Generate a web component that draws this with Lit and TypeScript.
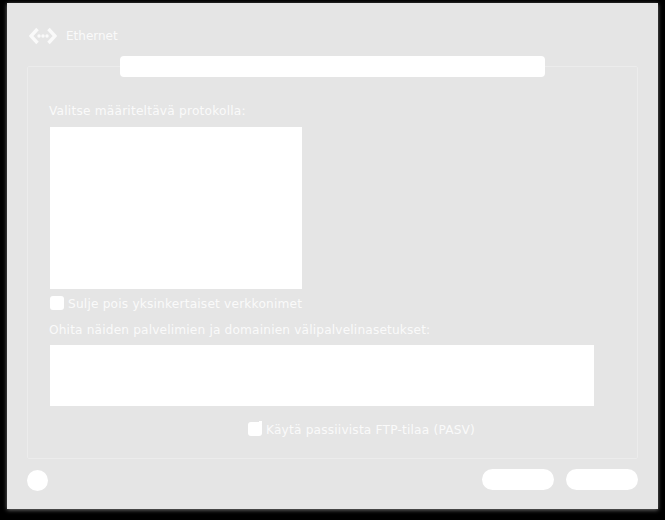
import { LitElement, html, css } from "lit";
import { customElement } from "lit/decorators.js";

@customElement("app-root")
export class AppRoot extends LitElement {
  static styles = css`
    :host { display: block; width: 665px; height: 520px; background: #000; overflow: hidden; font-family: "DejaVu Sans", sans-serif; color: #fafafa; font-size: 12px; }
    .window { box-sizing: border-box; margin: 3px 0 0 7px; width: 651px; height: 506px; background: #e5e5e5; padding: 0 20px; box-shadow: 0 1px 4px rgba(130,130,130,.9); display: flex; flex-direction: column; }
    .header { flex: none; height: 53px; display: flex; align-items: center; gap: 9px; padding-top: 12px; box-sizing: border-box; }
    .header svg { display: block; margin-left: 2px; }
    .header span { font-size: 12px; line-height: 14px; height: 14px; }
    .box { flex: none; position: relative; box-sizing: border-box; margin-top: 10px; height: 393px; border: 1px solid #ececec; border-radius: 2px; padding: 35px 0 0 22px; display: flex; flex-direction: column; align-items: flex-start; }
    .tabs { position: absolute; left: 92px; top: -11px; width: 425px; height: 21px; background: #fff; border-radius: 4px; }
    .label { height: 18px; line-height: 18px; font-size: 12.2px; letter-spacing: .2px; white-space: nowrap; margin-left: -1px; }
    .list { width: 252px; height: 162px; margin: 7px 0 0 0; background: #fff; }
    .check { display: flex; align-items: center; gap: 4px; height: 18px; white-space: nowrap; font-size: 12.2px; letter-spacing: .18px; }
    .check span { padding-top: 2px; }
    .check i { position: relative; display: block; width: 14px; height: 14px; background: #fff; border-radius: 3px; }
    .c1 { margin-top: 5px; }
    .l2 { margin-top: 9px; letter-spacing: .15px; }
    .area { width: 544px; height: 61px; margin-top: 6px; background: #fff; }
    .c2 { margin: 14px 0 0 198px; }
    .c2 i::after { content: ""; position: absolute; right: 0; top: -1px; width: 3px; height: 3px; background: #fff; }
    .footer { flex: none; display: flex; align-items: flex-start; height: 47px; padding-top: 10px; box-sizing: border-box; }
    .help { width: 21px; height: 21px; margin-top: 1px; border-radius: 50%; background: #fff; }
    .spacer { flex: 1; }
    .btn { width: 72px; height: 21px; border-radius: 11px; background: #fff; margin-left: 12px; }
  `;

  render() {
    return html`
      <div class="window">
        <div class="header">
          <svg width="28" height="18" viewBox="0 0 28 18" fill="none">
            <path d="M8.5 2 L2 9 L8.5 16" stroke="#fafafa" stroke-width="3.4"/>
            <path d="M19.5 2 L26 9 L19.5 16" stroke="#fafafa" stroke-width="3.4"/>
            <circle cx="10" cy="9" r="1.7" fill="#fafafa"/>
            <circle cx="14" cy="9" r="1.7" fill="#fafafa"/>
            <circle cx="18" cy="9" r="1.7" fill="#fafafa"/>
          </svg>
          <span>Ethernet</span>
        </div>
        <div class="box">
          <div class="tabs"></div>
          <div class="label">Valitse määriteltävä protokolla:</div>
          <div class="list"></div>
          <div class="check c1"><i></i><span>Sulje pois yksinkertaiset verkkonimet</span></div>
          <div class="label l2">Ohita näiden palvelimien ja domainien välipalvelinasetukset:</div>
          <div class="area"></div>
          <div class="check c2"><i></i><span>Käytä passiivista FTP-tilaa (PASV)</span></div>
        </div>
        <div class="footer">
          <div class="help"></div>
          <div class="spacer"></div>
          <div class="btn"></div>
          <div class="btn"></div>
        </div>
      </div>
    `;
  }
}
